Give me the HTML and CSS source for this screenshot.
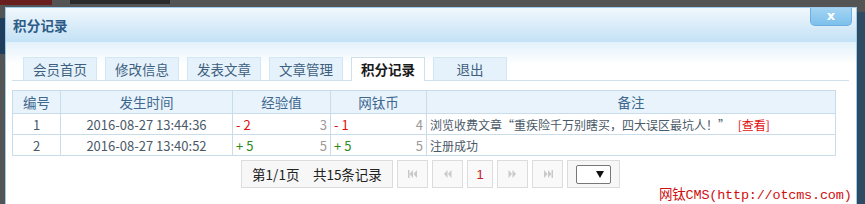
FILE: index.html
```html
<!DOCTYPE html>
<html lang="zh-CN">
<head>
<meta charset="utf-8">
<title>积分记录</title>
<link rel="stylesheet" href="styles.css">
</head>
<body>
<div class="backdrop">
  <span class="bd-logo"></span>
  <span class="bd-text"></span>
  <span class="bd-nav"></span>
  <span class="bd-right"></span>
</div>
<div class="dialog">
  <div class="dlg-head">
    <span class="dlg-title">积分记录</span>
    <span class="dlg-close">x</span>
  </div>
  <div class="dlg-body">
    <ul class="tabs">
      <li class="tab">会员首页</li>
      <li class="tab">修改信息</li>
      <li class="tab">发表文章</li>
      <li class="tab">文章管理</li>
      <li class="tab active">积分记录</li>
      <li class="tab">退出</li>
    </ul>
    <table class="grid">
      <colgroup>
        <col class="c1"><col class="c2"><col class="c3"><col class="c4"><col class="c5">
      </colgroup>
      <thead>
        <tr><th>编号</th><th>发生时间</th><th>经验值</th><th>网钛币</th><th>备注</th></tr>
      </thead>
      <tbody>
        <tr>
          <td class="ctr">1</td>
          <td class="ctr">2016-08-27 13:44:36</td>
          <td><div class="split"><span class="minus">- 2</span><span class="total">3</span></div></td>
          <td><div class="split"><span class="minus">- 1</span><span class="total">4</span></div></td>
          <td>浏览收费文章“重疾险千万别瞎买，四大误区最坑人！” <span class="view">[查看]</span></td>
        </tr>
        <tr>
          <td class="ctr">2</td>
          <td class="ctr">2016-08-27 13:40:52</td>
          <td><div class="split"><span class="plus">+ 5</span><span class="total">5</span></div></td>
          <td><div class="split"><span class="plus">+ 5</span><span class="total">5</span></div></td>
          <td>注册成功</td>
        </tr>
      </tbody>
    </table>
    <div class="pager">
      <span class="pinfo">第1/1页　共15条记录</span>
      <span class="pbtn"><svg width="10" height="8" viewBox="0 0 10 8"><rect x="0" y="0" width="1.5" height="8" fill="#c9c9c9"/><path d="M5 0 L1.5 4 L5 8Z M9 0 L5.5 4 L9 8Z" fill="#c9c9c9"/></svg></span>
      <span class="pbtn"><svg width="9" height="8" viewBox="0 0 9 8"><path d="M4.5 0 L1 4 L4.5 8Z M8.5 0 L5 4 L8.5 8Z" fill="#c9c9c9"/></svg></span>
      <span class="pbtn num">1</span>
      <span class="pbtn"><svg width="9" height="8" viewBox="0 0 9 8"><path d="M0.5 0 L4 4 L0.5 8Z M4.5 0 L8 4 L4.5 8Z" fill="#c9c9c9"/></svg></span>
      <span class="pbtn"><svg width="10" height="8" viewBox="0 0 10 8"><path d="M1 0 L4.5 4 L1 8Z M5 0 L8.5 4 L5 8Z" fill="#c9c9c9"/><rect x="8.5" y="0" width="1.5" height="8" fill="#c9c9c9"/></svg></span>
      <span class="psel"><span class="selbox"><svg width="8" height="7" viewBox="0 0 8 7"><path d="M0 0 L8 0 L4 7Z" fill="#111"/></svg></span></span>
    </div>
    <div class="mark">网钛CMS(http://otcms.com)</div>
  </div>
</div>
</body>
</html>
```

FILE: styles.css
```css
* { box-sizing: border-box; }
html, body { margin: 0; padding: 0; }
body {
  width: 865px;
  height: 204px;
  overflow: hidden;
  background: #545454;
  position: relative;
  padding: 7px 0 0 5px;
  font-family: "Noto Sans CJK SC", "Noto Sans", sans-serif;
}
.backdrop { position: absolute; left: 0; top: 0; width: 865px; height: 204px; }
.bd-logo { position: absolute; left: 0; top: 0; width: 52px; height: 5px; background: #6a1f1f; }
.bd-text { position: absolute; left: 70px; top: 0; width: 100px; height: 4px; background: #2b2b2b; }
.bd-nav { position: absolute; left: 0; top: 18px; width: 5px; height: 36px; background: #1f3d5c; }
.bd-right { position: absolute; left: 857px; top: 12px; width: 8px; height: 192px; background: #2f4a63; }

.dialog {
  position: relative;
  width: 852px;
  height: 210px;
  background: #fff;
  border: 1px solid #9ccbeb;
  border-bottom: none;
}
.dlg-head {
  height: 34px;
  background: linear-gradient(#f1f8fd, #dcedf9 45%, #c3e2f6);
  display: flex;
  align-items: center;
  padding-left: 7px;
  position: relative;
}
.dlg-title {
  font-size: 13.5px;
  font-weight: bold;
  color: #2d5b87;
  letter-spacing: 0.2px;
}
.dlg-close {
  position: absolute;
  right: 4px;
  top: 0;
  width: 42px;
  height: 18px;
  background: linear-gradient(#a4d4f2, #7cc0ec);
  border: 1px solid #6eaede;
  border-top: none;
  border-radius: 0 0 5px 5px;
  color: #fff;
  font-family: "DejaVu Sans", sans-serif;
  font-weight: bold;
  font-size: 13px;
  line-height: 15px;
  text-align: center;
}
.dlg-body {
  background: linear-gradient(#e2f1fb, #ffffff 22px);
  padding: 15px 0 0 6px;
  height: 176px;
  position: relative;
}
.tabs {
  list-style: none;
  margin: 0;
  padding: 0 0 0 11px;
  display: flex;
  gap: 8px;
  border-bottom: 1px solid #cfe0ea;
  width: 837px;
  height: 24px;
}
.tab {
  width: 74px;
  height: 23px;
  background: #e6f2fb;
  border: 1px solid #d3e6f3;
  border-bottom: none;
  color: #3e5f7e;
  font-size: 13.5px;
  line-height: 22px;
  text-align: center;
}
.tab.active {
  background: #fff;
  border-color: #cfe0ea;
  color: #1a1a1a;
  font-weight: bold;
  height: 24px;
}
.grid {
  margin-top: 9px;
  width: 823px;
  border-collapse: collapse;
  table-layout: fixed;
  font-size: 12px;
  color: #4a5968;
}
.c1 { width: 48px; }
.c2 { width: 172px; }
.c3 { width: 98px; }
.c4 { width: 96px; }
.c5 { width: 409px; }
.grid th, .grid td {
  border: 1px solid #c9dcea;
  padding: 0 3px;
  white-space: nowrap;
}
.grid th {
  height: 23px;
  background: #e9f3fb;
  color: #3d6890;
  font-weight: normal;
  font-size: 13.5px;
  text-align: center;
}
.grid td { height: 21px; }
.ctr { text-align: center; font-size: 13px; }
.split { display: flex; justify-content: space-between; font-size: 13px; }
.minus { color: #e01010; }
.plus { color: #2f8a1a; }
.total { color: #9a9a9a; }
.view { color: #e01010; margin-left: 5px; }
.pager {
  display: flex;
  gap: 4px;
  margin: 4px 0 0 229px;
  height: 28px;
}
.pinfo {
  width: 152px;
  background: #f7f7f7;
  border: 1px solid #dcdcdc;
  font-size: 13.5px;
  color: #222;
  display: flex;
  align-items: center;
  justify-content: center;
}
.pbtn {
  width: 31px;
  border: 1px solid #dcdcdc;
  background: #f9f9f9;
  display: flex;
  align-items: center;
  justify-content: center;
}
.pbtn.num { width: 26px; background: #fafafa; color: #c02020; font-size: 13px; font-family: "Liberation Sans", sans-serif; }
.psel {
  width: 53px;
  border: 1px solid #dcdcdc;
  background: #f7f7f7;
  display: flex;
  align-items: center;
  justify-content: center;
}
.selbox {
  width: 35px;
  height: 19px;
  border: 1px solid #777;
  border-radius: 2px;
  background: #fff;
  display: flex;
  align-items: center;
  justify-content: flex-end;
  padding-right: 6px;
}
.mark {
  position: absolute;
  left: 653px;
  top: 141px;
  color: #d01010;
  font-family: "Liberation Mono", "Noto Sans CJK SC", monospace;
  font-size: 13.5px;
  white-space: nowrap;
  letter-spacing: -0.2px;
}
```
